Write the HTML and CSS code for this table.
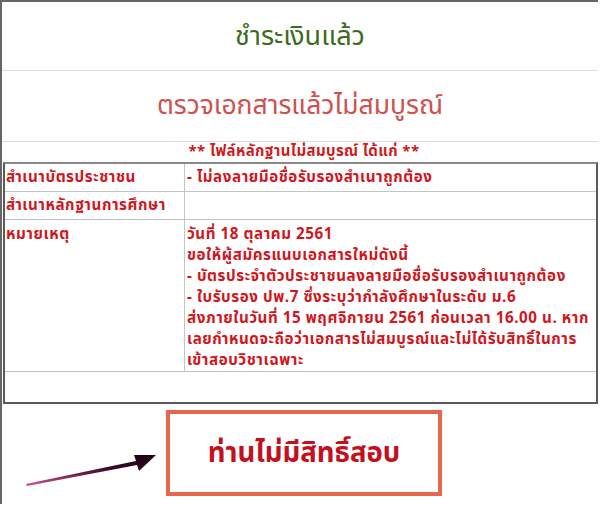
FILE: index.html
```html
<!DOCTYPE html>
<html lang="th">
<head>
<meta charset="utf-8">
<link rel="stylesheet" href="styles.css">
</head>
<body>
<div class="page">
  <div class="status status-paid">ชำระเงินแล้ว</div>
  <div class="status status-doc">ตรวจเอกสารแล้วไม่สมบูรณ์</div>
  <div class="note">** ไฟล์หลักฐานไม่สมบูรณ์ ได้แก่ **</div>
  <table class="doc-table">
    <tr class="row-short">
      <td class="label">สำเนาบัตรประชาชน</td>
      <td class="value">- ไม่ลงลายมือชื่อรับรองสำเนาถูกต้อง</td>
    </tr>
    <tr class="row-short">
      <td class="label">สำเนาหลักฐานการศึกษา</td>
      <td class="value"></td>
    </tr>
    <tr class="row-note">
      <td class="label">หมายเหตุ</td>
      <td class="value">วันที่ 18 ตุลาคม 2561<br>ขอให้ผู้สมัครแนบเอกสารใหม่ดังนี้<br>- บัตรประจำตัวประชาชนลงลายมือชื่อรับรองสำเนาถูกต้อง<br>- ใบรับรอง ปพ.7 ซึ่งระบุว่ากำลังศึกษาในระดับ ม.6<br>ส่งภายในวันที่ 15 พฤศจิกายน 2561 ก่อนเวลา 16.00 น. หาก<br>เลยกำหนดจะถือว่าเอกสารไม่สมบูรณ์และไม่ได้รับสิทธิ์ในการ<br>เข้าสอบวิชาเฉพาะ</td>
    </tr>
    <tr class="row-empty">
      <td colspan="2"></td>
    </tr>
  </table>
  <div class="result">
    <svg class="arrow" width="140" height="50" viewBox="0 0 140 50">
      <defs>
        <linearGradient id="ag" x1="0" y1="1" x2="1" y2="0">
          <stop offset="0" stop-color="#d0509a"/>
          <stop offset="0.6" stop-color="#3a0a2a"/>
          <stop offset="1" stop-color="#1a0010"/>
        </linearGradient>
      </defs>
      <path d="M2 38 L112 15 L110 9 L132 9 L115 25 L113 19 L3 40 Z" fill="url(#ag)"/>
    </svg>
    <div class="verdict">ท่านไม่มีสิทธิ์สอบ</div>
  </div>
</div>
</body>
</html>
```
FILE: styles.css
```css
html, body {
  margin: 0;
  padding: 0;
  background: #ffffff;
}
body {
  font-family: "Noto Sans Thai", "Noto Sans", "DejaVu Sans", sans-serif;
}
.page {
  width: 598px;
  height: 504px;
  border-top: 2px solid #666;
  border-left: 2px solid #666;
  box-sizing: border-box;
  overflow: hidden;
}
.status {
  display: flex;
  align-items: center;
  justify-content: center;
  border-bottom: 1px solid #dcdcdc;
}
.status-paid {
  height: 68px;
  color: #3d6b20;
  font-size: 27px;
}
.status-doc {
  height: 70px;
  color: #d0504e;
  font-size: 26.5px;
}
.note {
  text-align: center;
  color: #cc1c20;
  font-weight: bold;
  font-size: 15px;
  letter-spacing: 0.4px;
  line-height: 20px;
  height: 20px;
  padding-left: 8px;
}
.doc-table {
  width: 595px;
  margin-left: 1px;
  border-collapse: separate;
  border-spacing: 0;
  border: 2px solid #5a5a5a;
  border-top-color: #8a8a8a;
  color: #d0161c;
  font-weight: bold;
  font-size: 15.2px;
  letter-spacing: 0.55px;
}
.doc-table td {
  padding: 0 1px;
  border-bottom: 1px solid #c4c4c4;
  vertical-align: top;
  line-height: 21px;
}
.doc-table td.label {
  width: 177px;
  border-right: 1px solid #c4c4c4;
}
.row-short td {
  height: 27px;
  vertical-align: middle;
}
.row-note td {
  height: 147px;
  padding-top: 4px;
}
.doc-table td.value {
  padding-left: 2px;
  white-space: nowrap;
}
.row-empty td {
  height: 30px;
  border-bottom: none;
}
.result {
  display: flex;
  align-items: flex-start;
  padding-top: 6px;
  padding-left: 22px;
}
.arrow {
  margin-top: 36px;
  margin-right: 2px;
}
.verdict {
  width: 268px;
  height: 78px;
  border: 4px solid #e8654e;
  display: flex;
  align-items: center;
  justify-content: center;
  color: #c4101c;
  font-weight: bold;
  font-size: 27.5px;
}
```
